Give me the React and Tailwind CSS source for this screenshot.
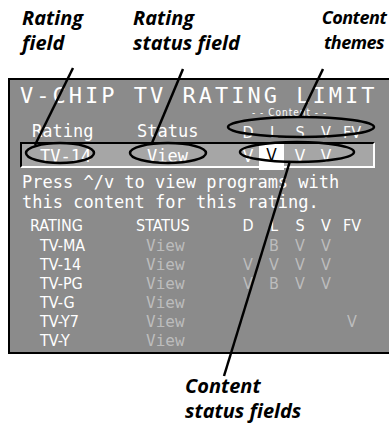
import React from 'react';

// columns used by every row of the screen: rating, status, D L S V FV
const cols = 'grid grid-cols-[106px_99px_26px_26px_26px_26px_26px]';
const mono = "font-['DejaVu_Sans_Mono','Liberation_Mono',monospace]";
const cond = "font-['DejaVu_Sans_Condensed','DejaVu_Sans',sans-serif]";

const rows = [
  { r: 'TV-MA', c: ['', 'B', 'V', 'V', ''] },
  { r: 'TV-14', c: ['V', 'V', 'V', 'V', ''] },
  { r: 'TV-PG', c: ['V', 'B', 'V', 'V', ''] },
  { r: 'TV-G', c: ['', '', '', '', ''] },
  { r: 'TV-Y7', c: ['', '', '', '', 'V'] },
  { r: 'TV-Y', c: ['', '', '', '', ''] },
];

function Callouts() {
  return (
    <svg className="absolute inset-0 pointer-events-none" width="389" height="425" viewBox="0 0 389 425">
      <g fill="none" stroke="#000" strokeWidth="2.5">
        <ellipse cx="60" cy="153" rx="34" ry="10" />
        <ellipse cx="168" cy="153" rx="38" ry="10" />
        <ellipse cx="301" cy="127" rx="73" ry="10" />
        <ellipse cx="297" cy="152" rx="57" ry="10" />
        <line x1="73" y1="68" x2="35" y2="145" />
        <line x1="183" y1="69" x2="152" y2="143" />
        <line x1="323" y1="69" x2="300" y2="117" />
        <line x1="290" y1="161" x2="224" y2="376" />
      </g>
    </svg>
  );
}

export default function App() {
  return (
    <div className="relative w-[389px] h-[425px] bg-white overflow-hidden">
      {/* labels above the screen */}
      <div className="flex h-[78px] pt-[5px] pr-[0px] text-[20px] leading-[25px] font-bold italic text-black font-['Open_Sans','Noto_Sans',sans-serif]">
        <div className="w-[133px] pl-[22px]">
          <div>Rating</div>
          <div>field</div>
        </div>
        <div>
          <div>Rating</div>
          <div>status field</div>
        </div>
        <div className="ml-auto w-[70px] flex flex-col items-center text-[18px] tracking-[-0.5px]">
          <div>Content</div>
          <div>themes</div>
        </div>
      </div>

      {/* the TV screen */}
      <div className="ml-[8px] h-[276px] border-l-2 border-y-2 border-black bg-[#8b8b8b] text-white">
        <div className={`pt-[3px] pl-[10px] text-[22px] leading-[26px] tracking-[3px] ${mono}`}>
          V-CHIP TV RATING LIMIT
        </div>
        <div className={`h-[8px] pl-[242px] text-[10px] leading-[8px] tracking-[1px] ${cond}`}>
          - - Content - -
        </div>
        <div className={`${cols} pl-[20px] mt-[1px] h-[20px] items-center`}>
          <div className={`pl-[2px] text-[17px] ${mono}`}>Rating</div>
          <div className={`pl-[1px] text-[17px] ${mono}`}>Status</div>
          {['D', 'L', 'S', 'V', 'FV'].map((h) => (
            <div key={h} className={`text-center text-[16px] pt-[3px] ${cond}`}>{h}</div>
          ))}
        </div>

        {/* selected rating row */}
        <div className="ml-[10px] mt-[4px] w-[355px] h-[26px] border-2 border-t-black border-l-black border-r-white border-b-white bg-[#a6a6a6]">
          <div className={`${cols} pl-[8px] h-full items-center text-[17px]`}>
            <div className={`pl-[10px] ${mono}`}>TV-14</div>
            <div className={`pl-[11px] ${mono}`}>View</div>
            <div className={`text-center ${cond}`}>V</div>
            <div className={`h-full -ml-[2px] w-[25px] bg-white text-black text-center leading-[22px] ${cond}`}>V</div>
            <div className={`text-center ${cond}`}>V</div>
            <div className={`text-center ${cond}`}>V</div>
            <div />
          </div>
        </div>

        <div className={`mt-[4px] pl-[12px] text-[17px] leading-[20px] ${mono}`}>
          <div>Press ^/v to view programs with</div>
          <div>this content for this rating.</div>
        </div>

        {/* rating table */}
        <div className="mt-[4px] pl-[20px] text-[16px] leading-[19px]">
          <div className={`${cols} h-[20px] ${cond}`}>
            <div>RATING</div>
            <div>STATUS</div>
            {['D', 'L', 'S', 'V', 'FV'].map((h) => (
              <div key={h} className="text-center">{h}</div>
            ))}
          </div>
          {rows.map((row) => (
            <div key={row.r} className={`${cols} h-[19px]`}>
              <div className={`pl-[10px] ${cond}`}>{row.r}</div>
              <div className={`pl-[10px] text-[#bdbdbd] ${mono}`}>View</div>
              {row.c.map((v, i) => (
                <div key={i} className={`text-center text-[#bdbdbd] ${cond}`}>{v}</div>
              ))}
            </div>
          ))}
        </div>
      </div>

      {/* label below the screen */}
      <div className="pl-[185px] pt-[19px] text-[20px] leading-[25px] font-bold italic text-black font-['Open_Sans','Noto_Sans',sans-serif]">
        <div>Content</div>
        <div>status fields</div>
      </div>

      <Callouts />
    </div>
  );
}
